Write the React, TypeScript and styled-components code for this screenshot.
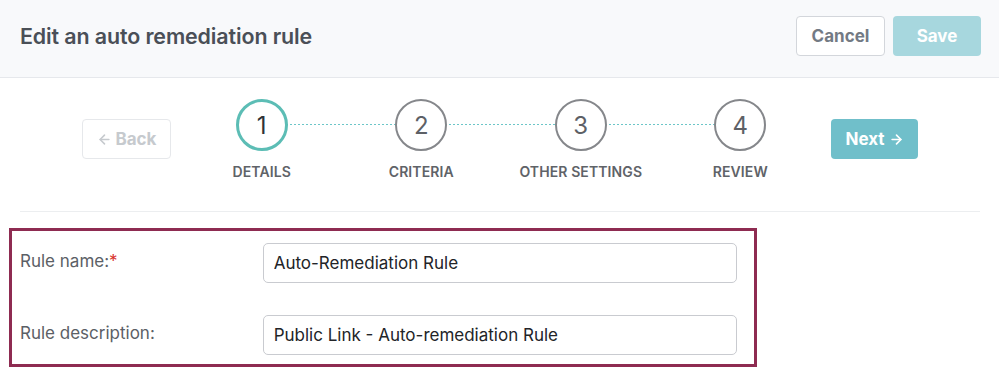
import React from "react";
import styled, { createGlobalStyle } from "styled-components";
import { ArrowLeft, ArrowRight } from "lucide-react";

const GlobalStyle = createGlobalStyle`
  html, body { margin: 0; padding: 0; background: #ffffff; }
  body { font-family: Inter, "Noto Sans", "Liberation Sans", sans-serif; -webkit-font-smoothing: antialiased; }
  * { box-sizing: border-box; }
`;

const Page = styled.div`
  width: 999px;
  height: 369px;
  overflow: hidden;
  background: #ffffff;
`;

const Header = styled.header`
  height: 78px;
  background: #f8f9fb;
  border-bottom: 1px solid #e6e8ec;
  display: flex;
  align-items: flex-start;
  justify-content: space-between;
  padding: 16px 18px 0 20px;
`;

const Title = styled.h1`
  margin: 0;
  line-height: 40px;
  font-size: 21.4px;
  font-weight: 600;
  color: #4a4f57;
  letter-spacing: -0.1px;
`;

const HeaderActions = styled.div`
  display: flex;
  gap: 8px;
`;

type Variant = "outline" | "primary" | "disabledPrimary" | "ghostDisabled";

const Button = styled.button<{ $variant: Variant; $w: number }>`
  width: ${(p) => p.$w}px;
  height: 40px;
  border-radius: 4px;
  font-family: inherit;
  font-size: 17px;
  font-weight: 700;
  display: inline-flex;
  align-items: center;
  justify-content: center;
  gap: 4px;
  padding: 0;
  cursor: pointer;
  border: 1px solid
    ${(p) =>
      p.$variant === "outline"
        ? "#d3d6db"
        : p.$variant === "ghostDisabled"
        ? "#e6e8eb"
        : "transparent"};
  background: ${(p) =>
    p.$variant === "outline" || p.$variant === "ghostDisabled"
      ? "#ffffff"
      : p.$variant === "primary"
      ? "#70bfca"
      : "#a7d7de"};
  color: ${(p) =>
    p.$variant === "outline"
      ? "#737a84"
      : p.$variant === "ghostDisabled"
      ? "#c6cace"
      : "#ffffff"};
`;

const Body = styled.div`
  padding: 21px 19px 0 20px;
`;

const WizardRow = styled.div`
  display: flex;
  align-items: flex-start;
  gap: 11px;
  padding-left: 62px;
  height: 113px;
  border-bottom: 1px solid #eceef0;
`;

const NavButton = styled(Button)`
  margin-top: 20px;
`;

const Stepper = styled.ol`
  list-style: none;
  margin: 0;
  padding: 0;
  display: flex;
  width: 638px;
`;

const Step = styled.li<{ $last?: boolean }>`
  position: relative;
  width: 159.5px;
  display: flex;
  flex-direction: column;
  align-items: center;
  &::after {
    content: "";
    display: ${(p) => (p.$last ? "none" : "block")};
    position: absolute;
    top: 25px;
    left: 50%;
    width: 100%;
    height: 1px;
    background: repeating-linear-gradient(to right, #6cc6c8 0 2px, transparent 2px 4px);
    z-index: 0;
  }
`;

const Circle = styled.div<{ $active?: boolean }>`
  position: relative;
  z-index: 1;
  width: 52px;
  height: 52px;
  border-radius: 50%;
  background: #ffffff;
  border: ${(p) => (p.$active ? "3px solid #5cbdb5" : "2px solid #85878b")};
  display: flex;
  align-items: center;
  justify-content: center;
  font-size: 24px;
  font-weight: 400;
  color: ${(p) => (p.$active ? "#2f3237" : "#5d6066")};
`;

const StepLabel = styled.span`
  margin-top: 12px;
  font-size: 14px;
  font-weight: 600;
  color: #5f6368;
  text-transform: uppercase;
  white-space: nowrap;
  letter-spacing: 0.1px;
`;

const FormBox = styled.div`
  margin: 16px 0 0 -11px;
  width: 748px;
  height: 139px;
  border: 3px solid #8e2b51;
  padding: 12px 17px 0 8px;
  display: flex;
  flex-direction: column;
  gap: 32px;
`;

const FieldRow = styled.div`
  display: flex;
  align-items: center;
`;

const Label = styled.label`
  width: 243px;
  font-size: 17px;
  color: #5b6066;
  align-self: flex-start;
  padding-top: 8px;
`;

const Required = styled.span`
  color: #d8312c;
`;

const Input = styled.input`
  width: 475px;
  height: 40px;
  border: 1px solid #c9cbd0;
  border-radius: 5px;
  padding: 0 10px;
  font-family: inherit;
  font-size: 17px;
  color: #222428;
  background: #ffffff;
  outline: none;
`;

const steps = ["Details", "Criteria", "Other settings", "Review"];

export default function App() {
  return (
    <Page>
      <GlobalStyle />
      <Header>
        <Title>Edit an auto remediation rule</Title>
        <HeaderActions>
          <Button $variant="outline" $w={89}>Cancel</Button>
          <Button $variant="disabledPrimary" $w={88}>Save</Button>
        </HeaderActions>
      </Header>
      <Body>
        <WizardRow>
          <NavButton $variant="ghostDisabled" $w={89}>
            <ArrowLeft size={15} strokeWidth={2.5} />
            Back
          </NavButton>
          <Stepper>
            {steps.map((s, i) => (
              <Step key={s} $last={i === steps.length - 1}>
                <Circle $active={i === 0}>{i + 1}</Circle>
                <StepLabel>{s}</StepLabel>
              </Step>
            ))}
          </Stepper>
          <NavButton $variant="primary" $w={87}>
            Next
            <ArrowRight size={15} strokeWidth={2.6} />
          </NavButton>
        </WizardRow>
        <FormBox>
          <FieldRow>
            <Label>
              Rule name:<Required>*</Required>
            </Label>
            <Input defaultValue="Auto-Remediation Rule" />
          </FieldRow>
          <FieldRow>
            <Label>Rule description:</Label>
            <Input defaultValue="Public Link - Auto-remediation Rule" />
          </FieldRow>
        </FormBox>
      </Body>
    </Page>
  );
}
